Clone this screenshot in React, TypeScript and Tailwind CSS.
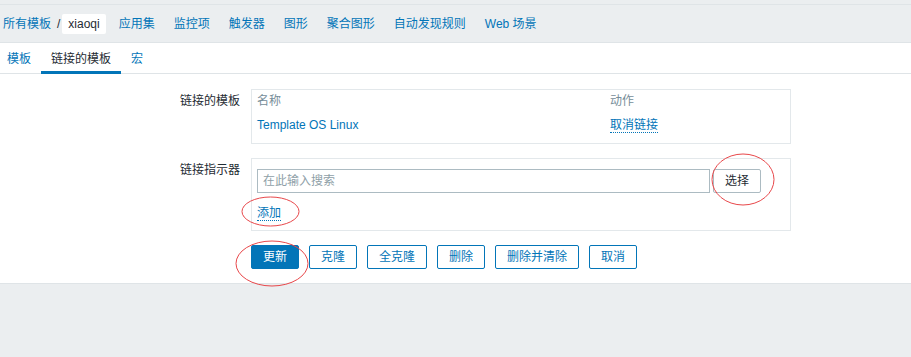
import React from "react";

const navItems = ["应用集", "监控项", "触发器", "图形", "聚合图形", "自动发现规则", "Web 场景"];
const buttons = ["克隆", "全克隆", "删除", "删除并清除", "取消"];

export default function App() {
  return (
    <div className="relative w-[911px] h-[357px] bg-[#ebeef0] text-[12px] leading-[16px] text-[#1f2c33] font-['Liberation_Sans','Noto_Sans_CJK_SC',sans-serif] overflow-hidden">
      {/* top band */}
      <div className="h-[5px] border-b border-[#dfe4e7]" />
      {/* header */}
      <div className="h-[38px] border-b border-[#dfe4e7] flex items-center pl-[3px]">
        <span className="text-[#0275b8]">所有模板</span>
        <span className="ml-[6px] mr-[2px] text-[#1f2c33]">/</span>
        <span className="h-[20px] px-[6px] flex items-center bg-white rounded-[2px] text-[#1f2c33]">xiaoqi</span>
        <div className="flex gap-[19px] ml-[13px]">
          {navItems.map((n) => (
            <span key={n} className="text-[#0275b8] whitespace-nowrap">{n}</span>
          ))}
        </div>
      </div>
      {/* tabs */}
      <div className="h-[31px] bg-white border-b border-[#dfe4e7] flex">
        <div className="h-[31px] pl-[7px] pr-[10px] pt-[4px] flex items-center border-b-[3px] border-transparent text-[#0275b8]">模板</div>
        <div className="h-[31px] px-[10px] pt-[4px] flex items-center border-b-[3px] border-[#0275b8] text-[#1f2c33]">链接的模板</div>
        <div className="h-[31px] px-[10px] pt-[4px] flex items-center border-b-[3px] border-transparent text-[#0275b8]">宏</div>
      </div>
      {/* content */}
      <div className="h-[210px] bg-white border-b border-[#dfe4e7] pt-[15px]">
        {/* row 1 */}
        <div className="flex">
          <div className="w-[240px] text-right pt-[4px]">链接的模板</div>
          <div className="ml-[11px] w-[540px] h-[55px] border border-[#e3e8eb] px-[5px] pt-[3px]">
            <div className="grid grid-cols-[353px_1fr] text-[#768d99]">
              <span>名称</span>
              <span>动作</span>
            </div>
            <div className="grid grid-cols-[353px_1fr] mt-[8px]">
              <span className="text-[#0275b8]">Template OS Linux</span>
              <span>
                <span className="text-[#0275b8] border-b border-dotted border-[#0275b8]">取消链接</span>
              </span>
            </div>
          </div>
        </div>
        {/* row 2 */}
        <div className="flex mt-[14px]">
          <div className="w-[240px] text-right pt-[4px]">链接指示器</div>
          <div className="ml-[11px] w-[540px] h-[73px] border border-[#e3e8eb] px-[5px] pt-[10px]">
            <div className="flex gap-[3px]">
              <div className="w-[453px] h-[24px] border border-[#acbbc2] flex items-center px-[5px] text-[#8f9fa8]">在此输入搜索</div>
              <div className="w-[48px] h-[24px] border border-[#acbbc2] rounded-[2px] flex items-center justify-center text-[#1f2c33]">选择</div>
            </div>
            <div className="mt-[12px]">
              <span className="text-[#0275b8] border-b border-dotted border-[#0275b8]">添加</span>
            </div>
          </div>
        </div>
        {/* row 3 buttons */}
        <div className="flex gap-[10px] ml-[251px] mt-[14px]">
          <div className="h-[24px] px-[11px] flex items-center bg-[#0275b8] border border-[#0275b8] rounded-[2px] text-white">更新</div>
          {buttons.map((b) => (
            <div key={b} className="h-[24px] px-[11px] flex items-center bg-white border border-[#0275b8] rounded-[2px] text-[#0275b8]">{b}</div>
          ))}
        </div>
      </div>
      {/* annotation ellipses */}
      <svg className="absolute left-0 top-0 pointer-events-none" width="911" height="357" viewBox="0 0 911 357">
        <ellipse cx="743" cy="179.5" rx="31" ry="25.5" fill="none" stroke="#e8474a" strokeWidth="1" />
        <ellipse cx="270.5" cy="211.5" rx="28.5" ry="14.5" fill="none" stroke="#e8474a" strokeWidth="1" />
        <ellipse cx="272" cy="263.5" rx="36" ry="22.5" fill="none" stroke="#e8474a" strokeWidth="1" />
      </svg>
    </div>
  );
}
